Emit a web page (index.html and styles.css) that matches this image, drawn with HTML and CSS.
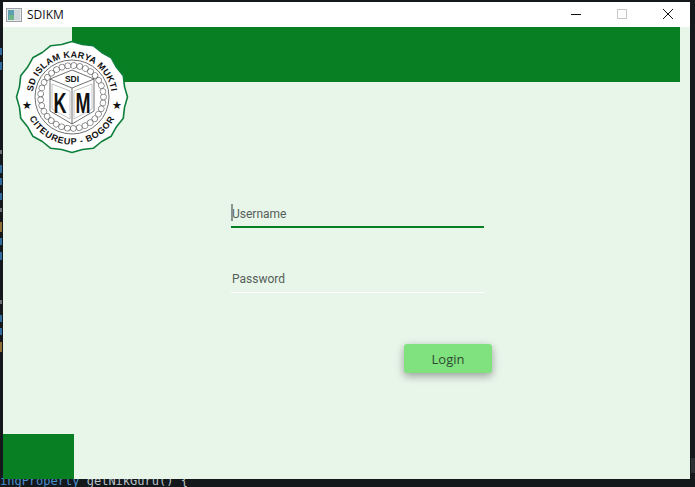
FILE: index.html
```html
<!DOCTYPE html>
<html>
    <head>
        <title>SDIKM</title>
        <link rel="stylesheet" href="styles.css">
    </head>

    <body>
        <!-- editor behind the window -->
        <div class="gutter">
            <span class="bit blue b1"></span>
            <span class="bit blue b2"></span>
            <span class="bit grey b3"></span>
            <span class="bit blue b4"></span>
            <span class="bit blue b5"></span>
            <span class="bit blue b6"></span>
            <span class="bit grey b7"></span>
            <span class="bit orange b8"></span>
            <span class="bit blue b9"></span>
            <span class="bit blue b10"></span>
            <span class="bit grey b11"></span>
            <span class="bit blue b12"></span>
            <span class="bit blue b13"></span>
            <span class="bit orange b14"></span>
        </div>
        <div class="scrollmark"></div>
        <div class="codeline"><span class="type">ingProperty</span> getNikGuru() {</div>

        <div class="window">
            <div class="titlebar">
                <svg class="appicon" width="16" height="14" viewBox="0 0 16 14">
                    <rect x="0.5" y="0.5" width="15" height="13" fill="#e6e8ea" stroke="#9aa0a6"/>
                    <rect x="2" y="2" width="6" height="10" fill="#5f9fb0"/>
                    <rect x="3" y="7" width="5" height="5" fill="#6fb58a"/>
                    <rect x="8" y="2" width="6" height="10" fill="#cfd6da"/>
                </svg>
                <span class="apptitle">SDIKM</span>
                <div class="controls">
                    <svg class="ctl" width="46" height="25" viewBox="0 0 46 25"><path d="M18 12.5h10" stroke="#111" fill="none"/></svg>
                    <svg class="ctl" width="46" height="25" viewBox="0 0 46 25"><rect x="18.5" y="7.5" width="9" height="9" stroke="#c8c8c8" fill="none"/></svg>
                    <svg class="ctl" width="46" height="25" viewBox="0 0 46 25"><path d="M18 7l10 10M28 7l-10 10" stroke="#111" fill="none"/></svg>
                </div>
            </div>

            <div class="content">
                <div class="topbar"></div>

                <div class="login">
                    <div class="field active">
                        <span class="caret"></span>
                        <span class="hint">Username</span>
                    </div>
                    <div class="field">
                        <span class="hint">Password</span>
                    </div>
                    <div class="btn">Login</div>
                </div>

                <div class="corner"></div>

                <svg class="logo" width="116" height="116" viewBox="-58 -58 116 116">
                    <defs>
                        <path id="arcTop" d="M-39.5 0A39.5 39.5 0 0 1 39.5 0"/>
                        <path id="arcBottom" d="M-47.5 0A47.5 47.5 0 0 0 47.5 0"/>
                    </defs>
                    <polygon class="edge" points="55.5,0 52.5,10.4 51.3,21.2 44.5,29.7 39.2,39.2 29.7,44.5 21.2,51.3 10.4,52.5 0,55.5 -10.4,52.5 -21.2,51.3 -29.7,44.5 -39.2,39.2 -44.5,29.7 -51.3,21.2 -52.5,10.4 -55.5,0 -52.5,-10.4 -51.3,-21.2 -44.5,-29.7 -39.2,-39.2 -29.7,-44.5 -21.2,-51.3 -10.4,-52.5 0,-55.5 10.4,-52.5 21.2,-51.3 29.7,-44.5 39.2,-39.2 44.5,-29.7 51.3,-21.2 52.5,-10.4"/>
                    <circle class="ring" r="37"/>
                    <circle class="bead-out" r="31.5"/>
                    <circle class="bead-in" r="31.5"/>
                    <text class="seal"><textPath href="#arcTop" startOffset="50%">SD ISLAM KARYA MUKTI</textPath></text>
                    <text class="seal wide"><textPath href="#arcBottom" startOffset="50%">CITEUREUP - BOGOR</textPath></text>
                    <text class="star" x="-45" y="12">★</text>
                    <text class="star" x="45" y="12">★</text>
                    <path class="cube" d="M0-27L22-18V14L0 27L-22 14V-18ZM-22-18L0-9L22-18M0-9V27"/>
                    <path class="cube thin" d="M-20-13L-2-6V22L-20 12ZM20-13L2-6V22L20 12Z"/>
                    <text class="sdi" y="-15">SDI</text>
                    <text class="big" transform="translate(-12 16) scale(.6 1)">K</text>
                    <text class="big" transform="translate(11 16) scale(.6 1)">M</text>
                </svg>
            </div>
        </div>
    </body>
</html>
```

FILE: styles.css
```css
html{
    height:100%;
}
body{
    height:100%;
    margin:0;
    padding:2px 5px 8px 3px;
    box-sizing:border-box;
    background-color:#14181b;
    overflow:hidden;
    position:relative;
    display:flex;
}
.window{
    flex:1;
    display:flex;
    flex-direction:column;
    position:relative;
}
.titlebar{
    height:25px;
    background-color:#fff;
    display:flex;
    align-items:center;
    padding-left:3px;
}
.appicon{
    flex:none;
}
.apptitle{
    margin-left:5px;
    font-family:"Open Sans",sans-serif;
    font-size:12px;
    color:#111;
}
.controls{
    margin-left:auto;
    display:flex;
    margin-right:-1px;
}
.ctl{
    display:block;
}
.content{
    flex:1;
    background-color:#e8f5e9;
    display:flex;
    flex-direction:column;
    position:relative;
}
.topbar{
    height:55px;
    margin:0 10px 0 69px;
    background-color:#087f23;
}
.login{
    width:261px;
    margin:117px 0 0 228px;
    display:flex;
    flex-direction:column;
    font-family:"Open Sans",sans-serif;
}
.field{
    width:253px;
    height:29px;
    margin-bottom:36px;
    box-sizing:border-box;
    border-bottom:1px solid #fff;
    display:flex;
    align-items:center;
    position:relative;
    padding-left:1px;
    padding-top:2px;
}
.field.active{
    border-bottom:2px solid #087f23;
}
.hint{
    font-family:Roboto,sans-serif;
    font-size:12px;
    color:#555f5a;
}
.caret{
    position:absolute;
    left:0;
    top:5px;
    width:2px;
    height:17px;
    background-color:#8a938d;
}
.btn{
    align-self:flex-end;
    width:88px;
    height:29px;
    margin-top:15px;
    background-color:#80e27e;
    border-radius:3px;
    box-shadow:0 3px 9px rgba(0,0,0,.35);
    font-size:13px;
    color:#2f4a33;
    display:flex;
    align-items:center;
    justify-content:center;
}
.corner{
    width:71px;
    height:45px;
    margin-top:auto;
    background-color:#087f23;
}

/* school seal lies over the green bar */
.logo{
    position:absolute;
    left:11px;
    top:12px;
}
.edge{
    fill:#fff;
    stroke:#0e7f3a;
    stroke-width:1.6;
    stroke-linejoin:round;
}
.ring{
    fill:none;
    stroke:#333;
    stroke-width:.7;
}
.bead-out{
    fill:none;
    stroke:#777;
    stroke-width:6.4;
    stroke-linecap:round;
    stroke-dasharray:.01 5.99;
}
.bead-in{
    fill:none;
    stroke:#fff;
    stroke-width:5;
    stroke-linecap:round;
    stroke-dasharray:.01 5.99;
}
.seal{
    font-family:"Liberation Sans",sans-serif;
    font-size:9px;
    font-weight:bold;
    letter-spacing:.3px;
    text-anchor:middle;
    fill:#111;
}
.seal.wide{
    letter-spacing:.7px;
}
.star{
    font-family:"DejaVu Sans",sans-serif;
    font-size:11px;
    text-anchor:middle;
    fill:#111;
}
.cube{
    fill:#fff;
    stroke:#333;
    stroke-width:.7;
}
.cube.thin{
    fill:none;
    stroke:#888;
    stroke-width:.5;
}
.sdi{
    font-family:"Liberation Sans",sans-serif;
    font-size:8.5px;
    font-weight:bold;
    text-anchor:middle;
    fill:#111;
}
.big{
    font-family:"Liberation Sans",sans-serif;
    font-size:30px;
    font-weight:bold;
    text-anchor:middle;
    fill:#111;
}

/* editor showing behind */
.gutter{
    position:absolute;
    left:0;
    top:0;
    width:3px;
    height:100%;
}
.bit{
    position:absolute;
    left:0;
    width:2px;
}
.blue{background-color:#2f6b9e;}
.grey{background-color:#6b7074;}
.orange{background-color:#8f6d35;}
.b1{top:48px;height:7px;}
.b2{top:62px;height:8px;}
.b3{top:150px;height:4px;}
.b4{top:165px;height:8px;}
.b5{top:178px;height:7px;}
.b6{top:193px;height:7px;}
.b7{top:208px;height:4px;}
.b8{top:222px;height:10px;}
.b9{top:238px;height:7px;}
.b10{top:252px;height:8px;}
.b11{top:300px;height:4px;}
.b12{top:315px;height:7px;}
.b13{top:328px;height:7px;}
.b14{top:342px;height:10px;}
.scrollmark{
    position:absolute;
    right:0;
    top:458px;
    width:4px;
    height:15px;
    background-color:#2b3033;
}
.codeline{
    position:absolute;
    left:0;
    top:474px;
    font-family:"DejaVu Sans Mono",monospace;
    font-size:12px;
    line-height:14px;
    white-space:pre;
    color:#b9c2c8;
}
.type{
    color:#4a90d0;
}
```
